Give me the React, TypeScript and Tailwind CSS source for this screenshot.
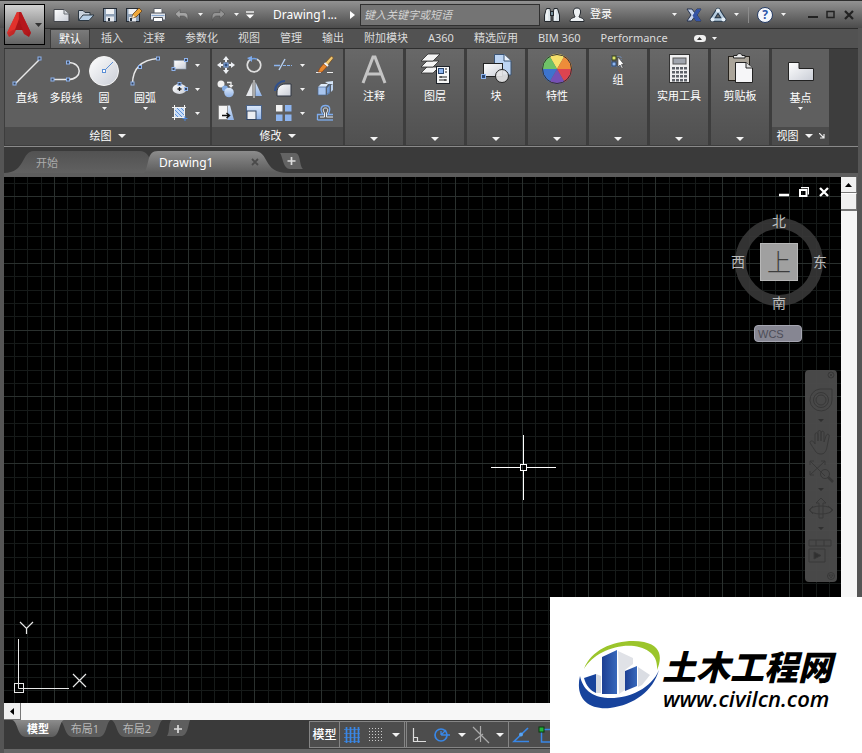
import type { ReactNode } from 'react'
import { useState } from 'react'

const MENU = ['插入', '注释', '参数化', '视图', '管理', '输出', '附加模块', 'A360', '精选应用', 'BIM 360', 'Performance']

function Caret({ big = false }: { big?: boolean }) {
  return big ? (
    <svg width="8" height="4" viewBox="0 0 8 4" className="shrink-0"><path d="M0 0H8L4 4Z" fill="#f2f2f2" /></svg>
  ) : (
    <svg width="5" height="3" viewBox="0 0 5 3" className="shrink-0"><path d="M0 0H5L2.500 3Z" fill="#f2f2f2" /></svg>
  )
}

// Small square grip drawn at the control points of the draw tools
function Grip({ x, y }: { x: number; y: number }) {
  return <rect x={x - 1.5} y={y - 1.5} width="3" height="3" fill="#38465c" stroke="#8fb4ee" strokeWidth="1" />
}

function Icon({ w = 24, h = 24, children }: { w?: number; h?: number; children: ReactNode }) {
  return <svg width={w} height={h} viewBox={`0 0 ${w} ${h}`} fill="none" className="shrink-0">{children}</svg>
}

function IconButton({ label, className, children }: { label: string; className: string; children: ReactNode }) {
  return (
    <button aria-label={label} className={`flex h-6 shrink-0 items-center justify-center ${className}`}>
      {children}
    </button>
  )
}

function Defs() {
  return (
    <svg width="0" height="0" className="absolute">
      <defs>
        <linearGradient id="paper" x1="0" y1="0" x2="1" y2="1">
          <stop offset="0" stopColor="#ffffff" /><stop offset="1" stopColor="#c9cdd6" />
        </linearGradient>
        <linearGradient id="blue" x1="0" y1="0" x2="0" y2="1">
          <stop offset="0" stopColor="#dbe8fa" /><stop offset="1" stopColor="#8fb2e6" />
        </linearGradient>
        <linearGradient id="red" x1="0" y1="0" x2="1" y2="1">
          <stop offset="0" stopColor="#e8443c" /><stop offset="1" stopColor="#a50f14" />
        </linearGradient>
        <linearGradient id="tab" x1="0" y1="0" x2="0" y2="1">
          <stop offset="0" stopColor="#8c8c8c" /><stop offset="1" stopColor="#5c5c5c" />
        </linearGradient>
        <linearGradient id="tabOff" x1="0" y1="0" x2="0" y2="1">
          <stop offset="0" stopColor="#525252" /><stop offset="1" stopColor="#616161" />
        </linearGradient>
        <linearGradient id="tower" x1="0" y1="0" x2="1" y2="0">
          <stop offset="0" stopColor="#1d3f93" /><stop offset="1" stopColor="#3768bb" />
        </linearGradient>
      </defs>
    </svg>
  )
}

function TitleBar() {
  return (
    <header className="flex h-7 items-center border-t border-[#2e2e2e] bg-linear-to-b from-[#929292] to-[#4c4c4c] pl-[50px] pr-1 text-[12px] text-white">
      <IconButton label="新建" className="w-6">
        <Icon w={18} h={16}><path d="M1 2.500H11L16 7V14.500H1Z" fill="url(#paper)" stroke="#44474d" /><path d="M11 2.500V7H16" fill="#d5d8dd" stroke="#6b6e75" /></Icon>
      </IconButton>
      <IconButton label="打开" className="w-6">
        <Icon w={18} h={16}><path d="M1.500 13.500V3.500H6L8 5.500H13V8" fill="#c9d3de" stroke="#2d3842" /><path d="M1.500 13.500L6 8H17L12 13.500Z" fill="#b9d1e8" stroke="#2d3842" /></Icon>
      </IconButton>
      <IconButton label="保存" className="w-6">
        <Icon w={16} h={16}><rect x="1.500" y="1.500" width="13" height="13" fill="#8fa1b6" stroke="#252b33" /><rect x="4" y="2" width="8" height="5" fill="#f0f2f5" /><rect x="4" y="9.500" width="8" height="5" fill="#e5e8ed" /><rect x="6" y="11" width="2" height="3" fill="#27313d" /></Icon>
      </IconButton>
      <IconButton label="另存为" className="w-6">
        <Icon w={18} h={16}><rect x="1.500" y="1.500" width="13" height="13" fill="#8fa1b6" stroke="#252b33" /><rect x="3.500" y="2" width="8" height="5" fill="#f0f2f5" /><rect x="4" y="10" width="7" height="4.500" fill="#e5e8ed" /><rect x="5" y="11" width="2" height="3" fill="#27313d" /><path d="M7 11L8 7L14 1L17 4L11 10Z" fill="#f0a83a" stroke="#62401a" strokeWidth=".8" /><path d="M7 11L8 8L10 10Z" fill="#fff3da" /></Icon>
      </IconButton>
      <IconButton label="打印" className="w-6">
        <Icon w={18} h={16}><path d="M5 7V1.500H12L13 2.500V7" fill="#fff" stroke="#5a5e66" /><rect x="1.500" y="6" width="15" height="7" rx="1" fill="#dfe3ea" stroke="#50545c" /><path d="M4.500 10.500H13.500V14.500H4.500Z" fill="#fff" stroke="#50545c" /><path d="M2.500 8.500H15.500" stroke="#8aa8d0" /></Icon>
      </IconButton>
      <IconButton label="放弃" className="w-6">
        <Icon w={16} h={14}><path d="M1 6L6 1.500V4.500H10C13.500 4.500 14.500 7 13.500 12.500C12.500 9 11 8 9 8H6V10.500Z" fill="#a4a4a4" stroke="#555" strokeWidth=".6" /></Icon>
      </IconButton>
      <IconButton label="放弃列表" className="w-3"><Caret /></IconButton>
      <IconButton label="重做" className="w-6">
        <Icon w={16} h={14}><path d="M15 6L10 1.500V4.500H6C2.500 4.500 1.500 7 2.500 12.500C3.500 9 5 8 7 8H10V10.500Z" fill="#949494" stroke="#4e4e4e" strokeWidth=".6" /></Icon>
      </IconButton>
      <IconButton label="重做列表" className="w-3"><Caret /></IconButton>
      <IconButton label="自定义快速访问工具栏" className="w-4">
        <Icon w={10} h={8}><path d="M1 1H9" stroke="#fff" strokeWidth="1.300" /><path d="M1 3.500H9L5 7.500Z" fill="#fff" /></Icon>
      </IconButton>
      <h1 className="ml-[15px] w-[72px] shrink-0">Drawing1...</h1>
      <IconButton label="显示搜索" className="w-[15px]"><Icon w={5} h={8}><path d="M0 0L5 4L0 8Z" fill="#fff" /></Icon></IconButton>
      <input
        aria-label="搜索"
        placeholder="键入关键字或短语"
        className="h-[22px] w-[180px] min-w-0 border border-[#303030] bg-[#747474] px-[3px] text-[11px] italic text-white outline-none placeholder:text-[#d2d2d2]"
      />
      <IconButton label="搜索按钮" className="w-6">
        <Icon w={18} h={16}><g stroke="#24282d" fill="#dde5ea" strokeWidth="1"><path d="M3.500 1.500H7L8 8V14.500H1.500V8Z" /><path d="M11 1.500H14.500L16.500 8V14.500H10V8Z" /><rect x="7.500" y="4.500" width="3" height="4" fill="#78909c" /></g><path d="M4 3V13M12 3V13" stroke="#fff" /></Icon>
      </IconButton>
      <button className="flex shrink-0 items-center gap-1 pl-1 text-[11px]">
        <Icon w={18} h={16}><path d="M9 1C12 1 13 3 12.500 6C12 8 11 9 11 10C13 11 16 11 16 14.500H2C2 11 5 11 7 10C7 9 6 8 5.500 6C5 3 6 1 9 1Z" fill="#edf1f4" stroke="#24292f" /></Icon>
        登录
      </button>
      <div className="flex-1" />
      <IconButton label="登录选项" className="w-4"><Caret /></IconButton>
      <IconButton label="Exchange" className="w-6">
        <Icon w={16} h={14}><path d="M1 1H6L8.500 4.500L11 1H15L11 7L15 13H10L8 9.500L5.500 13H1L5 7Z" fill="#c8d6ef" stroke="#26334f" /><path d="M11 1H15L11 7L15 13H10L6.500 7.500Z" fill="#3453a5" /></Icon>
      </IconButton>
      <IconButton label="A360" className="w-6">
        <Icon w={18} h={16}><path d="M9 3L15 12.500H3Z" stroke="#26384b" strokeWidth="4.500" strokeLinejoin="round" /><path d="M9 3L15 12.500H3Z" stroke="#b7cde0" strokeWidth="2.400" strokeLinejoin="round" /><circle cx="9" cy="3.500" r="2" fill="#e3edf5" /><circle cx="3.500" cy="12.500" r="2" fill="#e3edf5" /><circle cx="14.500" cy="12.500" r="2" fill="#e3edf5" /></Icon>
      </IconButton>
      <IconButton label="A360 选项" className="w-3"><Caret /></IconButton>
      <div className="ml-1.5 mr-1 h-4 w-px bg-[#8c8c8c]" />
      <IconButton label="帮助" className="w-6">
        <span className="flex size-4 items-center justify-center rounded-full border border-[#243a63] bg-[#f4f7fc] text-[12px] font-bold text-[#2a55a8]">?</span>
      </IconButton>
      <IconButton label="帮助选项" className="mr-[15px] w-3"><Caret /></IconButton>
      <IconButton label="最小化" className="w-[18px]"><Icon w={10} h={10}><path d="M0 7H10" stroke="#222" strokeWidth="2" /></Icon></IconButton>
      <IconButton label="最大化" className="w-[18px]"><Icon w={10} h={10}><rect x="1" y="1.500" width="7" height="6" stroke="#222" strokeWidth="1.500" /></Icon></IconButton>
      <IconButton label="关闭" className="w-[18px]"><Icon w={10} h={10}><path d="M1 1L9 9M9 1L1 9" stroke="#222" strokeWidth="2.200" /></Icon></IconButton>
    </header>
  )
}

function AppButton() {
  return (
    <button aria-label="应用程序菜单" className="absolute left-1 top-1 z-10 flex h-[41px] w-[41px] items-center justify-center gap-1 border border-black bg-linear-to-b from-[#d2d2d2] to-[#636363]">
      <Icon w={24} h={28}>
        <path d="M10 1H14L24 22L22 26L17 23L15 19H9L7 23L2 26L0 22Z" fill="url(#red)" />
        <path d="M12 1H14L24 22L16 19L12 9Z" fill="#b5171c" />
        <path d="M10 1L12 9L8 18L0 22Z" fill="#e2312c" />
        <path d="M12 8L16 19H8Z" fill="#a91418" />
      </Icon>
      <svg width="7" height="4" viewBox="0 0 7 4"><path d="M0 0H7L3.500 4Z" fill="#333" /></svg>
    </button>
  )
}

function MenuTabs() {
  return (
    <nav className="mx-1 flex h-5 items-end border-t border-[#2c2c2c] bg-[#525252] pl-[46px] text-[11px] leading-[18px] text-[#dcdcdc]">
      <a href="#default" className="mr-px h-[19px] shrink-0 border border-b-0 border-[#3a3a3a] bg-linear-to-b from-[#7a7a7a] to-[#616161] px-2 text-white">默认</a>
      {MENU.map((m) => (
        <a key={m} href={'#' + m} className="h-[19px] shrink-0 whitespace-nowrap px-2.5">{m}</a>
      ))}
      <button aria-label="最小化功能区" className="ml-4 flex h-5 shrink-0 items-center gap-1.5">
        <span className="flex h-[7px] w-3 items-center justify-center rounded-sm bg-[#f0f0f0]"><svg width="5" height="3" viewBox="0 0 5 3"><path d="M0 3H5L2.500 0Z" fill="#333" /></svg></span>
        <Caret />
      </button>
    </nav>
  )
}

function ToolButton({ label, className, caret, children }: { label: string; className: string; caret?: boolean; children: ReactNode }) {
  return (
    <button className={`flex shrink-0 flex-col items-center pt-1.5 ${className}`}>
      {children}
      <span className="mt-0.5 leading-[18px]">{label}</span>
      {caret && <Caret />}
    </button>
  )
}

function PanelTitle({ label, launcher }: { label: string; launcher?: boolean }) {
  return (
    <button className="flex h-[18px] w-full shrink-0 items-center justify-center gap-1.5 bg-[#4b4b4b]">
      {label}<Caret big />
      {launcher && <Icon w={6} h={6}><path d="M0 0L5 5M5 1V5H1" stroke="#eee" strokeWidth="1.200" /></Icon>}
    </button>
  )
}

function DrawPanel() {
  return (
    <section className="flex w-[205px] shrink-0 flex-col bg-[#5f5f5f]">
      <div className="flex flex-1 pl-[3px]">
        <ToolButton label="直线" className="w-[38px]">
          <Icon w={32} h={32}><path d="M4 29L28 5" stroke="#e8e8e8" strokeWidth="1.500" /><Grip x={3.500} y={28.500} /><Grip x={28.500} y={3.500} /></Icon>
        </ToolButton>
        <ToolButton label="多段线" className="w-10">
          <Icon w={32} h={32}><path d="M2 24.500H18C33 24.500 33 7.500 18 7.500" stroke="#e8e8e8" strokeWidth="1.500" /><Grip x={2.500} y={24.500} /><Grip x={18} y={24.500} /><Grip x={18} y={7.500} /></Icon>
        </ToolButton>
        <ToolButton label="圆" className="w-9" caret>
          <Icon w={32} h={32}><circle cx="16" cy="16" r="14.500" fill="url(#paper)" stroke="#f4f4f4" /><path d="M16 16L25 7" stroke="#5b8fd6" /><rect x="14.500" y="14.500" width="3" height="3" fill="#fff" stroke="#5b8fd6" /></Icon>
        </ToolButton>
        <ToolButton label="圆弧" className="w-[46px]" caret>
          <Icon w={32} h={32}><path d="M3.500 29C3.500 13 12 5 29 3.500" stroke="#e8e8e8" strokeWidth="1.500" /><Grip x={3.500} y={28.500} /><Grip x={11} y={12} /><Grip x={29} y={3.500} /></Icon>
        </ToolButton>
        <div className="flex flex-col pt-1">
          <IconButton label="矩形" className="w-[34px] gap-1.5">
            <Icon w={18} h={18}><rect x="3" y="4.500" width="12" height="8.500" fill="url(#paper)" stroke="#8fa0b5" strokeWidth=".6" /><Grip x={15} y={4} /><Grip x={2.500} y={13} /></Icon><Caret />
          </IconButton>
          <IconButton label="椭圆" className="w-[34px] gap-1.5">
            <Icon w={18} h={18}><ellipse cx="8.500" cy="9" rx="7" ry="5" fill="url(#paper)" /><path d="M8.500 7V11M6.500 9H10.500" stroke="#222" strokeWidth="1.300" /><Grip x={8.500} y={4} /><Grip x={15} y={9} /></Icon><Caret />
          </IconButton>
          <IconButton label="图案填充" className="w-[34px] gap-1.5">
            <Icon w={18} h={18}><rect x="4" y="4" width="10" height="10" fill="#c9dcf6" /><path d="M4 6L12 14M4 10L8 14M6 4L14 12M10 4L14 8" stroke="#5d93dd" /><path d="M1 3.500H15M3.500 1V16M13.500 1V14M1 13.500H14" stroke="#f1f1f1" /><path d="M14 12V17M11.500 14.500H16.500" stroke="#4a86dc" /></Icon><Caret />
          </IconButton>
        </div>
      </div>
      <PanelTitle label="绘图" />
    </section>
  )
}

function ModifyPanel() {
  return (
    <section className="flex w-[131px] shrink-0 flex-col bg-[#5f5f5f]">
      <div className="grid flex-1 auto-rows-[24px] grid-cols-[28px_28px_30px_8px_38px] justify-items-center pt-1">
        <IconButton label="移动" className="w-6">
          <Icon w={18} h={18}><g fill="#eef1f5"><path d="M9 0L12 4H6Z" /><path d="M9 18L12 14H6Z" /><path d="M0 9L4 6V12Z" /><path d="M18 9L14 6V12Z" /></g><path d="M9 3V6M9 12V15M3 9H6M12 9H15" stroke="#eef1f5" strokeWidth="2" /><rect x="7" y="7" width="4" height="4" fill="#33507c" stroke="#8fb4ee" /></Icon>
        </IconButton>
        <IconButton label="旋转" className="w-6">
          <Icon w={18} h={18}><path d="M12 3.200A6.700 6.700 0 1 1 6 3.200" stroke="#dedede" strokeWidth="1.700" /><path d="M6 3.200A6.700 6.700 0 0 1 12 3.200" stroke="#6f9fe2" strokeWidth="1.500" /><path d="M7 0V6L2 2Z" fill="#7fabea" /></Icon>
        </IconButton>
        <IconButton label="修剪" className="w-6">
          <Icon w={18} h={18}><path d="M0 9.500H6" stroke="#8cb6f0" strokeWidth="1.500" /><path d="M5 14L11 3" stroke="#b8cfee" strokeWidth="1.400" /><path d="M9 9.500H18" stroke="#8cb6f0" strokeDasharray="3 1" /></Icon>
        </IconButton>
        <IconButton label="修剪选项" className="w-2"><Caret /></IconButton>
        <IconButton label="删除" className="w-6">
          <Icon w={18} h={18}><path d="M0 16.500H5M11 16.500H17" stroke="#eee" /><path d="M15.500 0L17.500 2L11 10L8 8Z" fill="#efc66d" stroke="#6b421b" strokeWidth=".7" /><path d="M7.500 8L11 10.500L6 16H2L4 12Z" fill="#e9892e" stroke="#8a3d10" strokeWidth=".6" /><path d="M8.500 7L12 10" stroke="#f5f5f5" strokeWidth="2" /></Icon>
        </IconButton>
        <IconButton label="复制" className="w-6">
          <Icon w={18} h={18}><circle cx="4" cy="4" r="3.500" fill="#f0f0f0" /><circle cx="8" cy="8.500" r="3" fill="#83abe2" /><circle cx="12" cy="12.500" r="4.800" fill="url(#blue)" /><path d="M10 2.500H14V6" stroke="#eee" strokeWidth="1.300" /><path d="M11.500 5H16.500L14 8Z" fill="#eee" /></Icon>
        </IconButton>
        <IconButton label="镜像" className="w-6">
          <Icon w={18} h={18}><path d="M7.500 2V16H1Z" fill="#e6e8ec" /><path d="M10.500 2V16H17Z" fill="url(#blue)" /><path d="M9 0V18" stroke="#f4f4f4" /></Icon>
        </IconButton>
        <IconButton label="圆角" className="w-6">
          <Icon w={18} h={18}><path d="M3 16V12C3 7 7 4 11 4H17V16Z" fill="url(#paper)" stroke="#303642" /><path d="M1 11C1 5 6 1 11 1" stroke="#31508b" strokeWidth="2" /></Icon>
        </IconButton>
        <IconButton label="圆角选项" className="w-2"><Caret /></IconButton>
        <IconButton label="分解" className="w-6">
          <Icon w={18} h={18}><path d="M2 7H10V15H2Z" fill="#a8c5ef" /><path d="M2 7L5 4H12L10 7Z" fill="#e0ecfa" /><path d="M11 8L14 5V13L11 15Z" fill="#7199d2" /><path d="M9 2L17 1V4L12 4Z" fill="#d5e5f8" /><path d="M15 5L17 4V10L15 12Z" fill="#bcd2ee" /><path d="M2 7H10V15H2ZM10 7L14 4V12L10 15" stroke="#4b688f" strokeWidth=".7" /></Icon>
        </IconButton>
        <IconButton label="拉伸" className="w-6">
          <Icon w={18} h={18}><path d="M10 1.500H13L17 16H10Z" fill="url(#blue)" /><rect x="1.500" y="1.500" width="9" height="14" fill="#f5f5f5" stroke="#777" strokeWidth=".7" /><path d="M5 11.500H12M9.500 9L12.500 11.500L9.500 14" stroke="#111" strokeWidth="1.500" /></Icon>
        </IconButton>
        <IconButton label="缩放" className="w-6">
          <Icon w={18} h={18}><rect x="1.500" y="1.500" width="15" height="14" fill="url(#blue)" stroke="#4a6389" /><rect x="2" y="7" width="9" height="8.500" fill="#eceef2" stroke="#33445f" /></Icon>
        </IconButton>
        <IconButton label="阵列" className="w-6">
          <Icon w={18} h={18}><rect x="2" y="1" width="6.500" height="6.500" fill="#f2f2f2" /><g fill="#8db4ee"><rect x="11" y="1" width="6.500" height="6.500" /><rect x="2" y="10.500" width="6.500" height="6.500" /><rect x="11" y="10.500" width="6.500" height="6.500" /></g></Icon>
        </IconButton>
        <IconButton label="阵列选项" className="w-2"><Caret /></IconButton>
        <IconButton label="偏移" className="w-6">
          <Icon w={18} h={18}><path d="M1.500 16V10.500H7C3.500 5 5 1.500 9.500 1.500S15 5 12 10.500H17" stroke="#7eadef" strokeWidth="1.300" /><path d="M4 13H8.500V9C6.500 6 7 4 9.500 4S12.500 6 10.500 9V13H17" stroke="#e9eef6" /><path d="M1.500 16H17" stroke="#7eadef" strokeWidth="1.300" /></Icon>
        </IconButton>
      </div>
      <PanelTitle label="修改" />
    </section>
  )
}

function DropPanel({ label, small, children }: { label: string; small?: boolean; children: ReactNode }) {
  return (
    <button className="mr-px flex w-[58px] shrink-0 flex-col items-center bg-linear-to-b from-[#686868] to-[#505050] pb-1">
      <span className={`flex items-center justify-center ${small ? 'h-6 pt-0.5' : 'h-10'}`}>{children}</span>
      <span className="leading-[14px]">{label}</span>
      <span className="mt-auto"><Caret big /></span>
    </button>
  )
}

function Ribbon() {
  return (
    <div className="mx-1 flex h-[99px] gap-0.5 overflow-hidden border-b border-t border-b-[#8a8a8a] border-t-[#2f2f2f] bg-[#3d3d3d] pb-px pl-px text-[11px] text-white">
      <DrawPanel />
      <ModifyPanel />
      <DropPanel label="注释">
        <Icon w={32} h={34}><path d="M5 31L15 5H17L27 31M9 22H23" stroke="#c4c4c4" strokeWidth="3" /></Icon>
      </DropPanel>
      <DropPanel label="图层">
        <Icon w={32} h={32}>
          <g fill="#f4f4f4" stroke="#2c2c2c" strokeWidth=".8"><path d="M2 20L8 14H20L14 20Z" /><path d="M2 14L8 8H20L14 14Z" /><path d="M2 8L9 1H21L14 8Z" /></g>
          <rect x="17.500" y="13.500" width="13" height="17" fill="#f7f7f7" stroke="#1c2128" /><rect x="19.500" y="15.500" width="5" height="5" fill="#8db4ee" stroke="#28446d" /><path d="M26 16H28M26 19H28M20 24H28M20 27H28M22 23V25M26 26V28" stroke="#222" />
        </Icon>
      </DropPanel>
      <DropPanel label="块">
        <Icon w={32} h={32}>
          <path d="M14.500 1.500H24L31 8V22H14.500Z" fill="#bcd4f3" stroke="#3b5475" /><path d="M24 1.500V8H31" fill="#eef4fc" stroke="#3b5475" />
          <rect x="3.500" y="10.500" width="19" height="13" fill="url(#paper)" stroke="#222" /><circle cx="22" cy="23" r="6.500" fill="#e4e4e6" fillOpacity=".9" stroke="#222" /><rect x="1.500" y="21.500" width="4" height="4" fill="#2c4670" stroke="#8db4ee" />
        </Icon>
      </DropPanel>
      <DropPanel label="特性">
        <Icon w={32} h={32}>
          <g transform="translate(16 16)">
            <path d="M0 0L-7.500 -13A15 15 0 0 1 7.500 -13Z" fill="#f7e06a" />
            <path d="M0 0L7.500 -13A15 15 0 0 1 15 0Z" fill="#ee8c39" />
            <path d="M0 0H15A15 15 0 0 1 7.500 13Z" fill="#dd4450" />
            <path d="M0 0L7.500 13A15 15 0 0 1 -7.500 13Z" fill="#7650b5" />
            <path d="M0 0L-7.500 13A15 15 0 0 1 -15 0Z" fill="#3d74ce" />
            <path d="M0 0H-15A15 15 0 0 1 -7.500 -13Z" fill="#6fc267" />
            <circle r="14.500" stroke="#333" />
          </g>
        </Icon>
      </DropPanel>
      <DropPanel label="组" small>
        <Icon w={18} h={16}><path d="M2.500 2.500H12V12.500H2.500Z" stroke="#6f8ec0" strokeDasharray="1 1" /><rect x="3" y="2" width="4" height="4" fill="#dce66a" stroke="#333b1d" /><rect x="3" y="8" width="4" height="4" fill="#8db4ee" stroke="#28446d" /><path d="M9 3V13L11 11L13 15L14 14L12.500 10.500H15Z" fill="#fff" stroke="#333" strokeWidth=".6" /></Icon>
      </DropPanel>
      <DropPanel label="实用工具">
        <Icon w={32} h={32}>
          <rect x="6.500" y="1.500" width="20" height="28" fill="#f0f0f1" stroke="#333" /><rect x="10" y="5" width="13" height="6" fill="#a0a5ae" stroke="#555" />
          {[14, 18, 22, 26].map((y) => [9, 13, 17, 21].map((x) => <rect key={x + '-' + y} x={x} y={y} width="3" height="2.500" fill="#5d6168" />))}
        </Icon>
      </DropPanel>
      <DropPanel label="剪贴板">
        <Icon w={32} h={32}><rect x="4.500" y="3.500" width="21" height="24" fill="#aaa499" stroke="#26221c" /><path d="M9.500 5V2.500H13C13 0 18 0 18 2.500H21V5Z" fill="#eee" stroke="#222" /><path d="M11.500 9.500H22L28.500 15V29.500H11.500Z" fill="#f6f6f8" stroke="#222" /><path d="M22 9.500V15H28.500" fill="#ddd" stroke="#222" /></Icon>
      </DropPanel>
      <section className="flex w-[57px] shrink-0 flex-col bg-[#5f5f5f]">
        <ToolButton label="基点" className="flex-1" caret>
          <Icon w={32} h={32}><path d="M3.500 7.500H14V13.500H28.500V25.500H3.500Z" fill="url(#paper)" stroke="#222" /></Icon>
        </ToolButton>
        <PanelTitle label="视图" launcher />
      </section>
    </div>
  )
}

function FileTabs() {
  return (
    <div className="mx-1 flex h-[30px] items-start border-b-4 border-[#5d5d5d] bg-[#3a3a3a] pt-1 text-[11px]">
      <button className="relative h-[22px] w-[146px] pl-8 pt-0.5 text-left text-[#ababab]">
        <svg width="146" height="22" viewBox="0 0 146 22" className="absolute inset-0"><path d="M0 22C22 22 17 0 30 0H136C142 0 146 6 146 10V22Z" fill="url(#tabOff)" /></svg>
        <span className="relative">开始</span>
      </button>
      <button className="relative -ml-1.5 h-[22px] w-[144px] pl-[15px] pt-0.5 text-left text-[12px] text-white">
        <svg width="144" height="22" viewBox="0 0 144 22" className="absolute inset-0"><path d="M0 22C6 14 2 0 14 0H110C126 0 118 22 144 22Z" fill="url(#tab)" /></svg>
        <span className="relative">Drawing1</span>
        <svg width="8" height="8" viewBox="0 0 8 8" className="absolute left-[107px] top-[7px]"><path d="M1 1L7 7M7 1L1 7" stroke="#4a4a4a" strokeWidth="1.800" /></svg>
      </button>
      <button aria-label="新图形" className="relative -ml-2 mt-0.5 h-4 w-[23px]">
        <svg width="23" height="16" viewBox="0 0 23 16"><path d="M0 0H15C21 0 19 12 23 16H10C3 16 3 4 0 0Z" fill="#636363" /><path d="M11.500 4V12M7.500 8H15.500" stroke="#ddd" strokeWidth="1.700" /></svg>
      </button>
    </div>
  )
}

const STEP = 13.36

function Grid() {
  const lines = Array.from({ length: 200 }, (_, i) => i)
  return (
    <svg className="absolute inset-0 h-full w-full" shapeRendering="crispEdges">
      {[false, true].map((major) =>
        lines.filter((i) => (i % 5 === 0) === major).map((i) => {
          const x = Math.round(50 + (i - 5) * STEP)
          const y = Math.round(19 + (i - 5) * STEP)
          const fill = major ? '#2a302e' : '#161a19'
          return (
            <g key={i} fill={fill}>
              <rect x={x} y="0" width="1" height="100%" />
              <rect x="0" y={y} width="100%" height="1" />
            </g>
          )
        })
      )}
    </svg>
  )
}

function ViewCube() {
  return (
    <div className="absolute right-[10px] top-[35px] flex w-[104px] flex-col items-center text-[14px] leading-[18px] text-[#bdbdbd]">
      <svg width="88" height="88" viewBox="0 0 88 88" className="absolute left-2 top-[6px]"><circle cx="44" cy="44" r="38.500" stroke="#3b3b3b" strokeOpacity=".85" strokeWidth="11" fill="none" /></svg>
      <button className="relative">北</button>
      <div className="relative my-[13px] flex w-full items-center justify-between px-1">
        <button>西</button>
        <button className="size-[38px] border border-[#b8b8b8] bg-[#a0a0a0] text-[24px] font-light leading-[34px] text-[#3c3c3c]">上</button>
        <button>东</button>
      </div>
      <button className="relative">南</button>
      <button className="mr-0.5 mt-[13px] flex h-[17px] w-12 items-center rounded border border-[#a6a6b2] bg-[#868692] pl-[3px] font-['Liberation_Sans',sans-serif] text-[11px] text-[#4d4d57]">WCS</button>
    </div>
  )
}

function NavBar() {
  return (
    <div className="absolute right-1 top-[193px] h-[212px] w-8 rounded bg-[#4c4c4c]/95">
      <svg width="32" height="212" viewBox="0 0 32 212" fill="none" stroke="#383838" strokeWidth="1">
        <circle cx="26" cy="5" r="3" /><path d="M24.500 3.500L27.500 6.500M27.500 3.500L24.500 6.500" />
        <path d="M15 19H27V30A11 11 0 1 1 15 19Z" /><circle cx="16" cy="30" r="7.500" /><circle cx="16" cy="30" r="5" />
        <path d="M13 49H19L16 52ZM13 118H19L16 121ZM13 157H19L16 160Z" fill="#303030" stroke="none" />
        <path d="M11 82C7 76 5 73 5 72C6 70 9 71 10 74V65C10 62 13 62 13 65V71V62C13 60 16 60 16 62V71V63C16 60 20 61 19 64V72L21 66C22 63 25 64 24 67L22 77C21 82 19 84 16 84C13 84 12 83 11 82Z" />
        <path d="M5 91L20 106M20 91L5 105M5 95V91H9M16 91H20V95M5 101V105H9" /><circle cx="20" cy="104" r="4.500" /><path d="M23 107L28 112" strokeWidth="2.500" />
        <ellipse cx="16" cy="140" rx="11" ry="4" /><path d="M14 148V133H11L16 128L21 133H18V148Z" /><path d="M8 136L4 140L8 144M23 136L28 140L24 143" />
        <path d="M4 170H26V176H4ZM11 170V176M19 170V176M4 179H20V192H4Z" /><path d="M9 182L16 185.500L9 189Z" fill="#303030" />
        <circle cx="26" cy="206" r="3.500" /><path d="M24 205H28L26 208Z" />
      </svg>
    </div>
  )
}

function Canvas() {
  return (
    <main className="relative min-w-0 flex-1 overflow-hidden bg-black">
      <Grid />
      <div className="absolute right-3 top-2.5 flex gap-[10px]">
        <button aria-label="最小化窗口"><Icon w={10} h={10}><path d="M0 8H10" stroke="#fff" strokeWidth="2.500" /></Icon></button>
        <button aria-label="还原窗口"><Icon w={10} h={10}><path d="M1 3H7.500V9H1Z" stroke="#fff" strokeWidth="2" /><path d="M2 .7H9.500V7.500" stroke="#fff" strokeWidth="1.200" /></Icon></button>
        <button aria-label="关闭窗口"><Icon w={10} h={10}><path d="M1 1L9 9M9 1L1 9" stroke="#fff" strokeWidth="2.300" /></Icon></button>
      </div>
      <ViewCube />
      <NavBar />
      <svg width="66" height="66" viewBox="0 0 66 66" fill="none" stroke="#fff" className="absolute left-[487px] top-[258px]">
        <path d="M32.500 0V29M32.500 35V65M0 32.500H29M35 32.500H65" /><rect x="29.500" y="29.500" width="6" height="6" />
      </svg>
      <svg width="90" height="84" viewBox="0 -10 90 84" fill="none" stroke="#e8e8e8" className="absolute bottom-1 left-[6px]">
        <path d="M8.500 14V63.500H59" /><rect x="4.500" y="58.500" width="9" height="9" />
        <path d="M10 -3L16.500 3.500L23 -3M16.500 3.500V9M63 49L76 62M76 49L63 62" strokeWidth="1.200" />
      </svg>
    </main>
  )
}

function LayoutTab({ label, active, onClick }: { label: string; active: boolean; onClick: () => void }) {
  return (
    <button onClick={onClick} className={`relative h-[18px] w-[58px] text-[11px] leading-4 ${active ? 'z-10 -mr-[11px] font-bold text-white' : '-mr-1.5 text-[#b8b8b8]'}`}>
      <svg width="58" height="18" viewBox="0 0 58 18" className="absolute inset-0"><path d="M3 0H55C50 1 51 17 43 17H17C8 17 9 1 3 0Z" fill={active ? 'url(#tab)' : '#5c5c5c'} /></svg>
      <span className="relative">{label}</span>
    </button>
  )
}

function StatusBar() {
  const [layout, setLayout] = useState('模型')
  return (
    <footer className="mx-1 flex h-[33px] items-start border-b-4 border-[#676767] bg-[#3a3a3a]">
      <div className="flex w-[305px] shrink-0 pl-[5px]">
        {['模型', '布局1', '布局2'].map((l) => (
          <LayoutTab key={l} label={l} active={l === layout} onClick={() => setLayout(l)} />
        ))}
        <button aria-label="新建布局" className="ml-1 h-[17px] w-[26px]">
          <svg width="26" height="17" viewBox="0 0 26 17"><path d="M7 0H26C24 5 24 16 17 16H3C6 12 4 5 7 0Z" fill="#5e5e5e" /><path d="M14 5V13M10 9H18" stroke="#ddd" strokeWidth="1.700" /></svg>
        </button>
      </div>
      <div className="mt-px flex h-[27px] flex-1 border border-[#858585] bg-[#4d4d4d] text-[12px] font-medium text-white">
        <button className="w-[30px] shrink-0 border-r border-[#858585]">模型</button>
        <div className="flex w-[65px] shrink-0 items-center justify-between border-r border-[#858585] pl-1 pr-1">
          <button aria-label="图形栅格"><Icon w={16} h={16}><path d="M2.500 0V16M6.500 0V16M10.500 0V16M14.500 0V16" stroke="#3987e6" strokeWidth="1.700" /><path d="M0 2.500H16M0 6.500H16M0 10.500H16M0 14.500H16" stroke="#3987e6" strokeOpacity=".7" /></Icon></button>
          <button aria-label="捕捉模式"><Icon w={16} h={16}><path d="M1 1.500H16M1 4.500H16M1 7.500H16M1 10.500H16M1 13.500H16" stroke="#ccc" strokeDasharray="1 2" /></Icon></button>
          <button aria-label="捕捉选项"><Caret big /></button>
        </div>
        <div className="ml-px flex w-[103px] shrink-0 items-center justify-between border-x border-[#858585] px-1">
          <button aria-label="正交"><Icon w={16} h={16}><path d="M2.500 1V14.500H15M2.500 10.500H6.500V14.500" stroke="#ddd" strokeWidth="1.200" /></Icon></button>
          <button aria-label="极轴追踪"><Icon w={18} h={16}><circle cx="8" cy="8" r="6" stroke="#3987e6" strokeWidth="1.700" /><path d="M8 8H17M8 8L13 3M8 8V4" stroke="#3987e6" strokeWidth="1.300" /></Icon></button>
          <button aria-label="极轴选项"><Caret big /></button>
          <button aria-label="等轴测"><Icon w={18} h={18}><path d="M1 1L17 17M8.500 0V16M11 8L3 14" stroke="#aaa" strokeWidth="1.200" /></Icon></button>
          <button aria-label="等轴测选项"><Caret big /></button>
        </div>
        <div className="flex items-center gap-2 pl-[3px]">
          <button aria-label="对象捕捉追踪"><Icon w={18} h={18}><path d="M16 2L2 15.500H17" stroke="#3987e6" strokeWidth="1.700" /><circle cx="9" cy="8.500" r="2" fill="#58a4f5" /></Icon></button>
          <button aria-label="对象捕捉"><Icon w={16} h={18}><path d="M3.500 4V16H14V3.500H4" stroke="#3987e6" strokeWidth="1.500" /><rect x="1" y="1" width="5" height="5" fill="#24b33c" stroke="#08360f" /></Icon></button>
        </div>
      </div>
    </footer>
  )
}

function SiteBadge() {
  return (
    <aside className="absolute bottom-0 right-0 z-20 flex h-[156px] w-[312px] bg-white pl-7 pt-[43px] text-black">
      <svg width="84" height="70" viewBox="0 0 84 70" className="shrink-0">
        <path d="M6 29C14 7 43 -2 66 2C84 6 84 18 79 30C80 18 74 9 56 6C36 4 15 14 6 29Z" fill="#9bc52b" />
        <path d="M2 36C-3 57 9 70 32 68C56 65 75 51 81 30C73 49 50 59 30 58C13 57 5 49 2 36Z" fill="#17439c" />
        <path d="M40 11L55 18V24L47 30V50L41 54Z" fill="#e0e2e7" /><path d="M60 27L72 35L64 45L60 47Z" fill="#dadde3" />
        <path d="M24 17L39 10V54H24Z" fill="url(#tower)" /><path d="M6 38L18 34V53C13 51 8 46 6 38Z" fill="#17439c" /><path d="M18 34L23 36V53H18Z" fill="#d5d9e1" /><path d="M47 31L59 26V46L47 51Z" fill="url(#tower)" />
      </svg>
      <div className="pt-2">
        <div className="whitespace-nowrap text-[34px] font-black italic leading-[38px]">土木工程网</div>
        <a href="#civilcn" className="block pl-px font-['Open_Sans',sans-serif] text-[22px] font-semibold italic leading-6">www.civilcn.com</a>
      </div>
    </aside>
  )
}

export default function App() {
  return (
    <div className="relative flex h-screen flex-col overflow-hidden bg-[#555] font-['Noto_Sans','Noto_Sans_CJK_SC',sans-serif]">
      <Defs />
      <AppButton />
      <TitleBar />
      <MenuTabs />
      <Ribbon />
      <FileTabs />
      <div className="ml-1 mr-[5px] flex min-h-0 flex-1">
        <Canvas />
        <div className="flex w-4 shrink-0 flex-col bg-[#f7f7f7]">
          <button aria-label="向上滚动" className="flex h-4 items-center justify-center border-b border-r border-[#777] bg-[#f0f0f0]"><svg width="7" height="4" viewBox="0 0 7 4"><path d="M0 4H7L3.500 0Z" /></svg></button>
          <div className="h-[18px] border-b-2 border-r border-t border-[#777] border-t-white bg-[#f0f0f0]" />
        </div>
      </div>
      <div className="ml-1 mr-[5px] flex h-[17px] shrink-0 bg-[#f7f7f7]">
        <button aria-label="向左滚动" className="flex w-[17px] items-center justify-center border-b border-r border-[#777] bg-[#f0f0f0]"><svg width="4" height="7" viewBox="0 0 4 7"><path d="M4 0V7L0 3.500Z" /></svg></button>
      </div>
      <StatusBar />
      <SiteBadge />
    </div>
  )
}
